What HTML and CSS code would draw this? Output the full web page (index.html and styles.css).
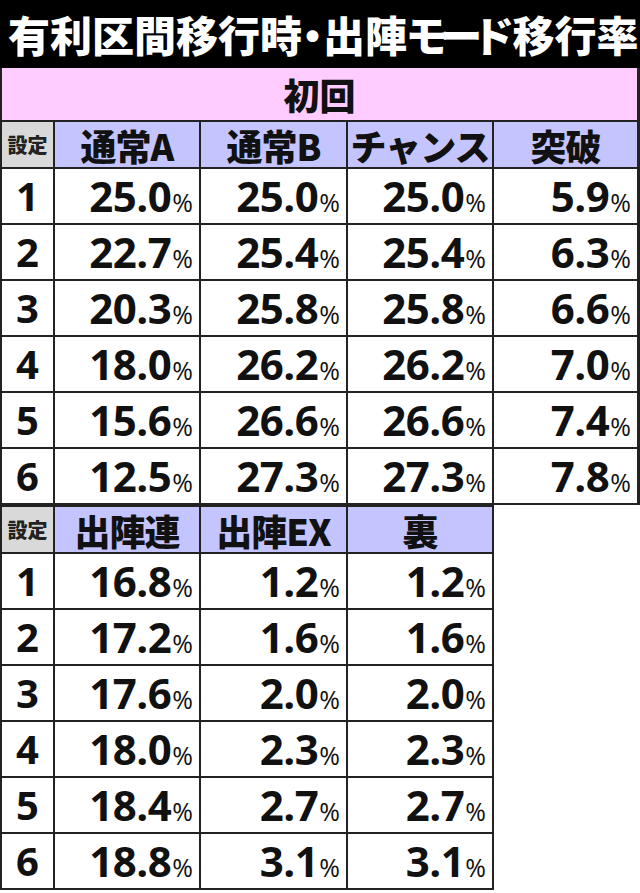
FILE: index.html
```html
<!DOCTYPE html>
<html lang="ja">
<head>
<meta charset="utf-8">
<link rel="stylesheet" href="styles.css">
</head>
<body>
<div class="title">有利区間移行時・出陣<span class="kana">モード</span>移行率</div>
<div class="grid t1">
  <div class="cell pink">初回</div>
  <div class="cell set">設定</div>
  <div class="cell head">通常A</div>
  <div class="cell head">通常B</div>
  <div class="cell head">チャンス</div>
  <div class="cell head">突破</div>

  <div class="cell lbl">1</div>
  <div class="cell num">25.0<span class="pc">%</span></div>
  <div class="cell num">25.0<span class="pc">%</span></div>
  <div class="cell num">25.0<span class="pc">%</span></div>
  <div class="cell num">5.9<span class="pc">%</span></div>

  <div class="cell lbl">2</div>
  <div class="cell num">22.7<span class="pc">%</span></div>
  <div class="cell num">25.4<span class="pc">%</span></div>
  <div class="cell num">25.4<span class="pc">%</span></div>
  <div class="cell num">6.3<span class="pc">%</span></div>

  <div class="cell lbl">3</div>
  <div class="cell num">20.3<span class="pc">%</span></div>
  <div class="cell num">25.8<span class="pc">%</span></div>
  <div class="cell num">25.8<span class="pc">%</span></div>
  <div class="cell num">6.6<span class="pc">%</span></div>

  <div class="cell lbl">4</div>
  <div class="cell num">18.0<span class="pc">%</span></div>
  <div class="cell num">26.2<span class="pc">%</span></div>
  <div class="cell num">26.2<span class="pc">%</span></div>
  <div class="cell num">7.0<span class="pc">%</span></div>

  <div class="cell lbl">5</div>
  <div class="cell num">15.6<span class="pc">%</span></div>
  <div class="cell num">26.6<span class="pc">%</span></div>
  <div class="cell num">26.6<span class="pc">%</span></div>
  <div class="cell num">7.4<span class="pc">%</span></div>

  <div class="cell lbl">6</div>
  <div class="cell num">12.5<span class="pc">%</span></div>
  <div class="cell num">27.3<span class="pc">%</span></div>
  <div class="cell num">27.3<span class="pc">%</span></div>
  <div class="cell num">7.8<span class="pc">%</span></div>
</div>
<div class="grid t2">
  <div class="cell set">設定</div>
  <div class="cell head">出陣連</div>
  <div class="cell head">出陣EX</div>
  <div class="cell head">裏</div>

  <div class="cell lbl">1</div>
  <div class="cell num">16.8<span class="pc">%</span></div>
  <div class="cell num">1.2<span class="pc">%</span></div>
  <div class="cell num">1.2<span class="pc">%</span></div>

  <div class="cell lbl">2</div>
  <div class="cell num">17.2<span class="pc">%</span></div>
  <div class="cell num">1.6<span class="pc">%</span></div>
  <div class="cell num">1.6<span class="pc">%</span></div>

  <div class="cell lbl">3</div>
  <div class="cell num">17.6<span class="pc">%</span></div>
  <div class="cell num">2.0<span class="pc">%</span></div>
  <div class="cell num">2.0<span class="pc">%</span></div>

  <div class="cell lbl">4</div>
  <div class="cell num">18.0<span class="pc">%</span></div>
  <div class="cell num">2.3<span class="pc">%</span></div>
  <div class="cell num">2.3<span class="pc">%</span></div>

  <div class="cell lbl">5</div>
  <div class="cell num">18.4<span class="pc">%</span></div>
  <div class="cell num">2.7<span class="pc">%</span></div>
  <div class="cell num">2.7<span class="pc">%</span></div>

  <div class="cell lbl">6</div>
  <div class="cell num">18.8<span class="pc">%</span></div>
  <div class="cell num">3.1<span class="pc">%</span></div>
  <div class="cell num">3.1<span class="pc">%</span></div>
</div>
</body>
</html>
```

FILE: styles.css
```css
html, body {
  margin: 0;
  padding: 0;
  background: #fff;
}
body {
  width: 640px;
  font-family: "Noto Sans CJK JP", "Noto Sans", sans-serif;
  color: #111;
}
.title {
  height: 68px;
  background: #000;
  color: #fff;
  font-weight: 900;
  font-size: 42px;
  line-height: 68px;
  padding-left: 8px;
  white-space: nowrap;
  overflow: hidden;
  font-feature-settings: "palt" 1;
}
.kana {
  letter-spacing: -6px;
  margin-right: 6px;
}
.grid {
  display: grid;
  gap: 2px;
  background: #222;
  box-sizing: border-box;
}
.t1 {
  width: 640px;
  grid-template-columns: 51px 144px 145px 144px 143px;
  grid-template-rows: 52px 45px repeat(6, 54px);
  padding: 0 3px 2px 2px;
}
.t2 {
  width: 494px;
  grid-template-columns: 51px 144px 145px 144px;
  grid-template-rows: 45px repeat(6, 54px);
  padding: 2px;
}
.cell {
  background: #fff;
  display: flex;
  align-items: center;
  justify-content: center;
  white-space: nowrap;
  line-height: 1;
}
.pink {
  grid-column: 1 / -1;
  background: #ffccff;
  font-weight: 900;
  font-size: 36px;
}
.set {
  background: #d9d9d9;
  font-weight: 900;
  font-size: 20px;
  color: #222;
}
.head {
  background: #c4c4ff;
  font-weight: 900;
  font-size: 36px;
  letter-spacing: -1px;
}
.lbl {
  font-family: "Open Sans", "Noto Sans", sans-serif;
  font-weight: 700;
  font-size: 40px;
}
.num {
  justify-content: flex-end;
  align-items: baseline;
  padding: 0 6px 0 0;
  font-family: "Open Sans", "Noto Sans", sans-serif;
  font-weight: 700;
  font-size: 42px;
  letter-spacing: -0.5px;
  line-height: 54px;
}
.pc {
  font-weight: 400;
  font-size: 25px;
  letter-spacing: 0;
  margin-left: 1px;
}
```
